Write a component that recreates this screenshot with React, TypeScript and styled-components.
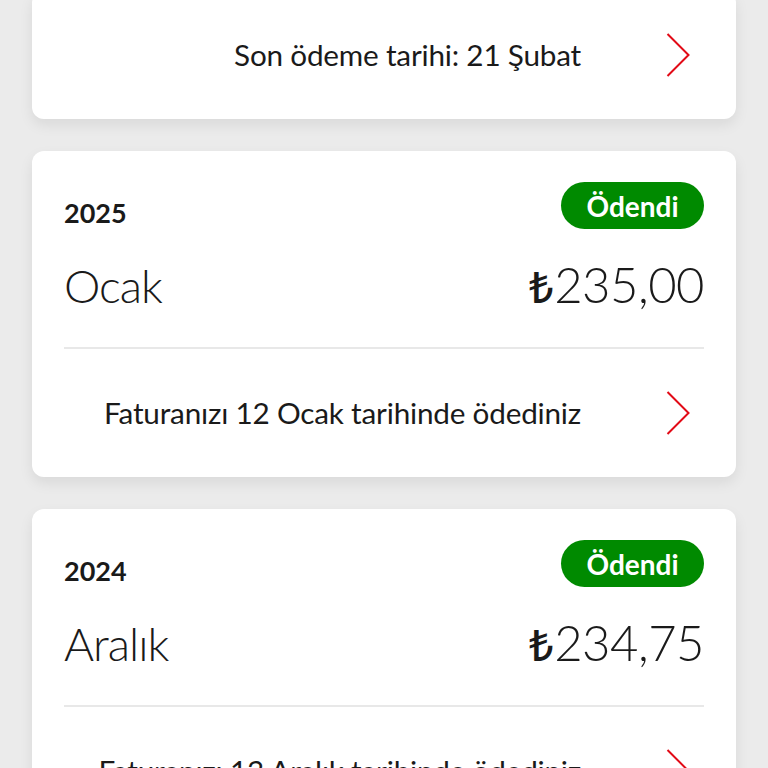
import React from "react";
import styled, { createGlobalStyle } from "styled-components";

const GlobalStyle = createGlobalStyle`
  html, body {
    margin: 0;
    padding: 0;
    background: #ebebeb;
    font-family: Lato, "Noto Sans", "DejaVu Sans", sans-serif;
    color: #1a1a1a;
    overflow: hidden;
  }
`;

const List = styled.div`
  display: flex;
  flex-direction: column;
  gap: 32px;
  padding: 0 32px;
  margin-top: -9px;
`;

const Card = styled.div`
  background: #ffffff;
  border-radius: 12px;
  box-shadow: 0 6px 14px rgba(0, 0, 0, 0.08);
`;

const Head = styled.div`
  padding: 31px 32px 0;
`;

const TopRow = styled.div`
  display: flex;
  justify-content: space-between;
  align-items: flex-end;
`;

const Year = styled.div`
  font-size: 27px;
  font-weight: 700;
  line-height: 1;
  margin-bottom: 3px;
`;

const Badge = styled.span`
  display: inline-flex;
  align-items: center;
  justify-content: center;
  height: 47px;
  width: 143px;
  border-radius: 24px;
  background: #008a00;
  color: #ffffff;
  font-size: 28px;
  font-weight: 700;
`;

const MainRow = styled.div`
  display: flex;
  justify-content: space-between;
  align-items: baseline;
  margin-top: 31px;
  height: 87px;
`;

const Month = styled.div`
  font-size: 46px;
  font-weight: 300;
  line-height: 1;
  letter-spacing: -1px;
`;

const Amount = styled.div`
  font-size: 49px;
  font-weight: 300;
  line-height: 1;
  letter-spacing: -0.5px;
`;

const Lira = styled.span`
  font-family: "Noto Sans", "DejaVu Sans", sans-serif;
  font-weight: 500;
  font-size: 43px;
  margin-right: 1px;
`;

const Divider = styled.div`
  height: 2px;
  background: #e8e8e8;
  margin: 0 32px;
`;

const Footer = styled.div`
  height: 128px;
  display: flex;
  align-items: center;
  justify-content: flex-end;
  padding-right: 46px;
  gap: 85px;
`;

const FooterText = styled.div`
  font-size: 29.7px;
  line-height: 1;
  letter-spacing: -0.2px;
`;

function Chevron() {
  return (
    <svg width="24" height="44" viewBox="0 0 24 44" fill="none">
      <path d="M1.5 1 L22.5 22 L1.5 43" stroke="#e20a16" strokeWidth="2" />
    </svg>
  );
}

type Bill = {
  year: string;
  month: string;
  amount: string;
  note: string;
};

const bills: Bill[] = [
  { year: "2025", month: "Ocak", amount: "235,00", note: "Faturanızı 12 Ocak tarihinde ödediniz" },
  { year: "2024", month: "Aralık", amount: "234,75", note: "Faturanızı 13 Aralık tarihinde ödediniz" },
];

function BillFooter({ text }: { text: string }) {
  return (
    <Footer>
      <FooterText>{text}</FooterText>
      <Chevron />
    </Footer>
  );
}

export default function App() {
  return (
    <>
      <GlobalStyle />
      <List>
        <Card>
          <BillFooter text="Son ödeme tarihi: 21 Şubat" />
        </Card>
        {bills.map((b) => (
          <Card key={b.year + b.month}>
            <Head>
              <TopRow>
                <Year>{b.year}</Year>
                <Badge>Ödendi</Badge>
              </TopRow>
              <MainRow>
                <Month>{b.month}</Month>
                <Amount>
                  <Lira>₺</Lira>
                  {b.amount}
                </Amount>
              </MainRow>
            </Head>
            <Divider />
            <BillFooter text={b.note} />
          </Card>
        ))}
      </List>
    </>
  );
}
